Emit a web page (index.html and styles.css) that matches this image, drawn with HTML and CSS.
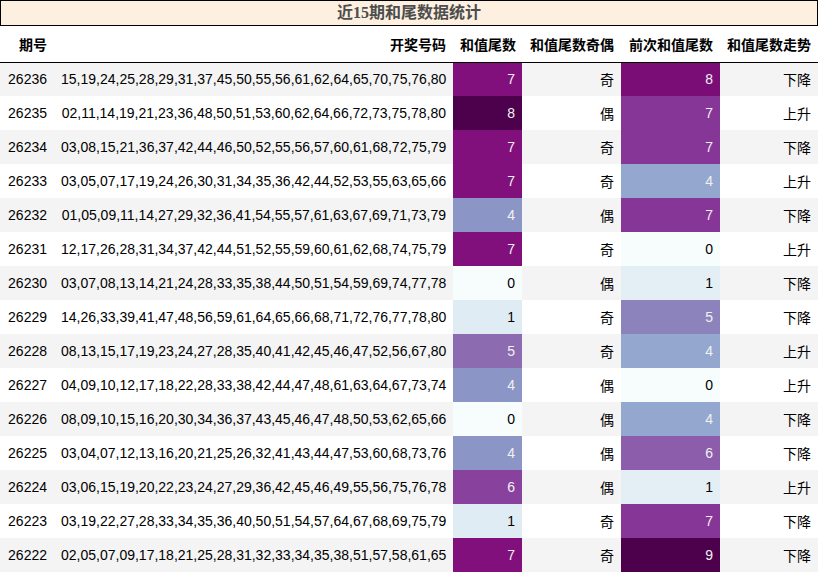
FILE: index.html
```html
<!DOCTYPE html>
<html lang="zh">
<head>
<meta charset="utf-8">
<title>近15期和尾数据统计</title>
<link rel="stylesheet" href="styles.css">
</head>
<body>
<div class="panel">
  <div class="title">近15期和尾数据统计</div>
  <table class="stats">
    <colgroup>
      <col class="w-id"><col class="w-nums"><col class="w-tail"><col class="w-parity"><col class="w-prev"><col class="w-trend">
    </colgroup>
    <thead>
      <tr><th>期号</th><th>开奖号码</th><th>和值尾数</th><th>和值尾数奇偶</th><th>前次和值尾数</th><th>和值尾数走势</th></tr>
    </thead>
    <tbody>
      <tr><td>26236</td><td>15,19,24,25,28,29,31,37,45,50,55,56,61,62,64,65,70,75,76,80</td><td style="background:#810f7c;color:#f1f1f1">7</td><td>奇</td><td style="background:#7b0d77;color:#f1f1f1">8</td><td>下降</td></tr>
      <tr><td>26235</td><td>02,11,14,19,21,23,36,48,50,51,53,60,62,64,66,72,73,75,78,80</td><td style="background:#4d004b;color:#f1f1f1">8</td><td>偶</td><td style="background:#863696;color:#f1f1f1">7</td><td>上升</td></tr>
      <tr><td>26234</td><td>03,08,15,21,36,37,42,44,46,50,52,55,56,57,60,61,68,72,75,79</td><td style="background:#810f7c;color:#f1f1f1">7</td><td>奇</td><td style="background:#863696;color:#f1f1f1">7</td><td>下降</td></tr>
      <tr><td>26233</td><td>03,05,07,17,19,24,26,30,31,34,35,36,42,44,52,53,55,63,65,66</td><td style="background:#810f7c;color:#f1f1f1">7</td><td>奇</td><td style="background:#94a7cf;color:#f1f1f1">4</td><td>上升</td></tr>
      <tr><td>26232</td><td>01,05,09,11,14,27,29,32,36,41,54,55,57,61,63,67,69,71,73,79</td><td style="background:#8c96c6;color:#f1f1f1">4</td><td>偶</td><td style="background:#863696;color:#f1f1f1">7</td><td>下降</td></tr>
      <tr><td>26231</td><td>12,17,26,28,31,34,37,42,44,51,52,55,59,60,61,62,68,74,75,79</td><td style="background:#810f7c;color:#f1f1f1">7</td><td>奇</td><td style="background:#f7fcfd;color:#000000">0</td><td>上升</td></tr>
      <tr><td>26230</td><td>03,07,08,13,14,21,24,28,33,35,38,44,50,51,54,59,69,74,77,78</td><td style="background:#f7fcfd;color:#000000">0</td><td>偶</td><td style="background:#e3eef5;color:#000000">1</td><td>下降</td></tr>
      <tr><td>26229</td><td>14,26,33,39,41,47,48,56,59,61,64,65,66,68,71,72,76,77,78,80</td><td style="background:#e0ecf4;color:#000000">1</td><td>奇</td><td style="background:#8c83bd;color:#f1f1f1">5</td><td>下降</td></tr>
      <tr><td>26228</td><td>08,13,15,17,19,23,24,27,28,35,40,41,42,45,46,47,52,56,67,80</td><td style="background:#8c6bb1;color:#f1f1f1">5</td><td>奇</td><td style="background:#94a7cf;color:#f1f1f1">4</td><td>上升</td></tr>
      <tr><td>26227</td><td>04,09,10,12,17,18,22,28,33,38,42,44,47,48,61,63,64,67,73,74</td><td style="background:#8c96c6;color:#f1f1f1">4</td><td>偶</td><td style="background:#f7fcfd;color:#000000">0</td><td>上升</td></tr>
      <tr><td>26226</td><td>08,09,10,15,16,20,30,34,36,37,43,45,46,47,48,50,53,62,65,66</td><td style="background:#f7fcfd;color:#000000">0</td><td>偶</td><td style="background:#94a7cf;color:#f1f1f1">4</td><td>下降</td></tr>
      <tr><td>26225</td><td>03,04,07,12,13,16,20,21,25,26,32,41,43,44,47,53,60,68,73,76</td><td style="background:#8c96c6;color:#f1f1f1">4</td><td>偶</td><td style="background:#8b5daa;color:#f1f1f1">6</td><td>下降</td></tr>
      <tr><td>26224</td><td>03,06,15,19,20,22,23,24,27,29,36,42,45,46,49,55,56,75,76,78</td><td style="background:#88419d;color:#f1f1f1">6</td><td>偶</td><td style="background:#e3eef5;color:#000000">1</td><td>上升</td></tr>
      <tr><td>26223</td><td>03,19,22,27,28,33,34,35,36,40,50,51,54,57,64,67,68,69,75,79</td><td style="background:#e0ecf4;color:#000000">1</td><td>奇</td><td style="background:#863696;color:#f1f1f1">7</td><td>下降</td></tr>
      <tr><td>26222</td><td>02,05,07,09,17,18,21,25,28,31,32,33,34,35,38,51,57,58,61,65</td><td style="background:#810f7c;color:#f1f1f1">7</td><td>奇</td><td style="background:#4d004b;color:#f1f1f1">9</td><td>下降</td></tr>
    </tbody>
  </table>
</div>
</body>
</html>
```

FILE: styles.css
```css
html, body {
  margin: 0;
  padding: 0;
  background: #ffffff;
}

.panel {
  width: 818px;
}

.title {
  box-sizing: border-box;
  height: 26px;
  line-height: 24px;
  border: 1px solid #000000;
  background: #fdf0e1;
  color: #4d4d4d;
  font-family: "Liberation Serif", "Noto Sans CJK SC", serif;
  font-weight: bold;
  font-size: 16px;
  text-align: center;
}

.stats {
  width: 818px;
  border-collapse: collapse;
  table-layout: fixed;
  font-family: "Liberation Sans", "Noto Sans CJK SC", sans-serif;
  font-size: 14px;
  color: #000000;
}

.w-id { width: 54px; }
.w-nums { width: 399px; }
.w-tail { width: 69px; }
.w-parity { width: 99px; }
.w-prev { width: 99px; }
.w-trend { width: 98px; }

.stats th,
.stats td {
  padding: 0 7px;
  text-align: right;
  white-space: nowrap;
  overflow: hidden;
}

.stats thead th {
  height: 36px;
  font-weight: bold;
  border-bottom: 1px solid #000000;
  padding-top: 1px;
  box-sizing: border-box;
}

.stats tbody td {
  height: 34px;
  box-sizing: border-box;
}

.stats tbody tr:nth-child(odd) {
  background: #f4f4f4;
}

.stats tbody tr:nth-child(even) {
  background: #ffffff;
}
```
